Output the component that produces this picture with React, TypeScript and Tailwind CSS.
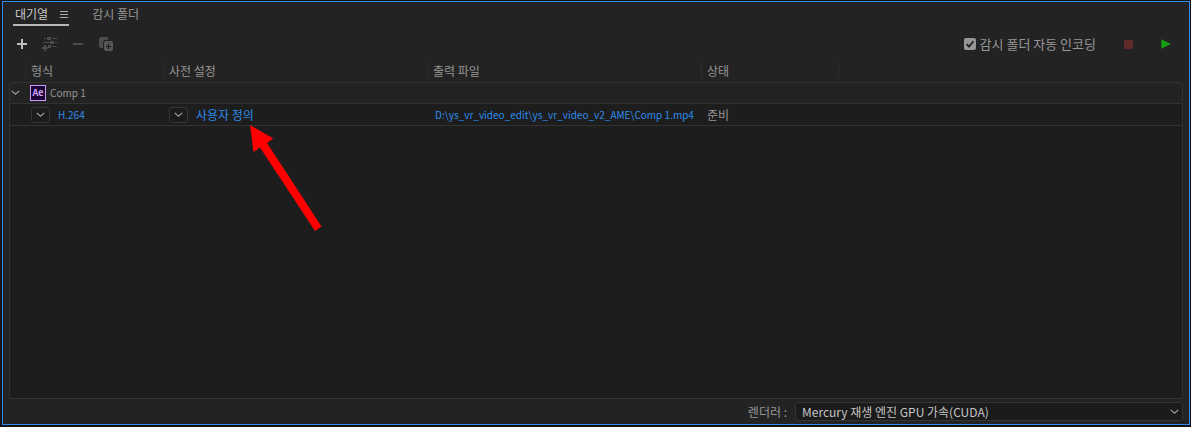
import type { ReactNode } from "react";

function Chevron({ className = "" }: { className?: string }) {
  return (
    <svg className={className} width="9" height="6" viewBox="0 0 9 6" fill="none" stroke="#a0a0a0" strokeWidth="1.2" aria-hidden="true">
      <path d="M0.7 0.9 4.5 4.3 8.3 0.9" />
    </svg>
  );
}

function ToolButton({ label, disabled, children }: { label: string; disabled?: boolean; children: ReactNode }) {
  return (
    <button type="button" aria-label={label} disabled={disabled} className="flex h-5 w-7 items-center justify-center">
      {children}
    </button>
  );
}

function DropButton({ label }: { label: string }) {
  return (
    <button type="button" aria-label={label} className="flex h-4 w-[19px] shrink-0 items-center justify-center rounded-[3px] border border-[#363636] bg-[#1b1b1b]">
      <Chevron />
    </button>
  );
}

const columns = [
  { title: "형식", width: "w-[138px]" },
  { title: "사전 설정", width: "w-[264px]" },
  { title: "출력 파일", width: "w-[274px]" },
  { title: "상태", width: "w-[137px]" },
];

export default function App() {
  return (
    <div className="flex h-screen flex-col bg-[#141414] pt-px pr-px pb-0.5 pl-0.5 font-['Noto_Sans_CJK_KR',sans-serif] text-xs leading-4 text-[#969696]">
      <main className="relative flex min-h-0 flex-1 flex-col border border-[#2d8ceb] bg-[#232323] px-1.5">
        <nav className="flex h-6 gap-[23px] pl-1" role="tablist">
          <button type="button" role="tab" aria-selected="true" className="flex h-6 items-center gap-3 border-b-2 border-[#b9b9b9] pt-0.5 pl-0.5 text-[#c8c8c8]">
            <span>대기열</span>
            <svg width="9" height="9" viewBox="0 0 9 9" fill="#a8a8a8" aria-hidden="true" shapeRendering="crispEdges">
              <path d="M0 1h8v1H0zM0 4h8v1H0zM0 7h8v1H0z" />
            </svg>
          </button>
          <button type="button" role="tab" aria-selected="false" className="flex h-6 items-center">
            감시 폴더
          </button>
        </nav>

        <div className="flex h-9 items-center justify-between pr-[3px]">
          <div className="-ml-px flex">
            <ToolButton label="추가">
              <svg width="12" height="12" viewBox="0 0 12 12" fill="#c0c0c0" shapeRendering="crispEdges">
                <path d="M5 1h2v4h4v2H7v4H5V7H1V5h4z" />
              </svg>
            </ToolButton>
            <ToolButton label="출력 추가" disabled>
              <svg width="16" height="14" viewBox="0 0 16 14" fill="#4c4c4c" shapeRendering="crispEdges">
                <path d="M2 1h2v1H2zM5 0h4v3H5zM10 1h5v1h-5zM1 5h7v1H1zM8 4h4v3H8zM13 5h2v1h-2zM8 9h1v1H8zM6 8h3v3H6zM10 9h4v1h-4z" />
                <path d="M2 8h2v2h2v2H4v2H2v-2H0v-2h2z" />
              </svg>
            </ToolButton>
            <ToolButton label="제거" disabled>
              <svg width="10" height="10" viewBox="0 0 10 10" fill="#4c4c4c" shapeRendering="crispEdges">
                <path d="M0 4h10v2H0z" />
              </svg>
            </ToolButton>
            <ToolButton label="복제" disabled>
              <svg width="14" height="14" viewBox="0 0 14 14" shapeRendering="crispEdges">
                <path fill="#4c4c4c" d="M1 0h8v3H5v1H4v7H1v-1H0V1h1z" />
                <path fill="#555555" d="M6 4h7v1h1v8h-1v1H6v-1H5V5h1z" />
                <path fill="#181818" d="M9 7h1v2h2v1h-2v2H9v-2H7V9h2z" />
              </svg>
            </ToolButton>
          </div>
          <div className="flex items-center">
            <label className="flex items-center gap-1 text-[13px]">
              <span className="grid">
                <input type="checkbox" defaultChecked className="col-start-1 row-start-1 size-3 appearance-none rounded-[2px] bg-[#969696]" />
                <svg className="pointer-events-none col-start-1 row-start-1" width="12" height="12" viewBox="0 0 12 12" fill="none" stroke="#202020" strokeWidth="1.8">
                  <path d="M2.6 6.1 5 8.6 9.4 3.2" />
                </svg>
              </span>
              감시 폴더 자동 인코딩
            </label>
            <div className="ml-[18px] flex gap-2.5">
              <ToolButton label="중지" disabled>
                <span className="size-[9px] bg-[#602a2a]" />
              </ToolButton>
              <ToolButton label="시작">
                <svg width="10" height="10" viewBox="0 0 10 10" fill="#14a014">
                  <path d="M0.3 0.3 9.8 5 0.3 9.7z" />
                </svg>
              </ToolButton>
            </div>
          </div>
        </div>

        <table className="w-full table-fixed border-separate border-spacing-0 text-left">
          <thead>
            <tr className="h-5">
              <th className="w-4 p-0" aria-label="펼치기" />
              {columns.map((c) => (
                <th key={c.title} scope="col" className={`${c.width} p-0 pb-0.5 font-normal`}>
                  <span className="block border-l border-[#2d2d2d] pl-[5px]">{c.title}</span>
                </th>
              ))}
              <th className="p-0 pb-0.5">
                <span className="block h-4 border-l border-[#2d2d2d]" />
              </th>
            </tr>
          </thead>
          <tbody>
            <tr className="h-[22px]">
              <td colSpan={6} className="rounded-t-[4px] border border-[#323232] p-0">
                <div className="flex items-center">
                  <button type="button" aria-label="Comp 1 접기" className="flex h-5 w-5 items-center pl-px">
                    <Chevron />
                  </button>
                  <span className="flex size-4 items-center justify-center border border-[#c79bf8] bg-[#1d0636] text-[9px] font-bold leading-[14px] text-[#d0a5ff]">
                    Ae
                  </span>
                  <span className="pl-1 text-[10px]">Comp 1</span>
                </div>
              </td>
            </tr>
            <tr className="h-[22px] bg-[#1d1d1d]">
              <td className="border-b border-l border-[#323232] p-0" />
              <td className="border-b border-[#323232] p-0">
                <div className="flex items-center gap-2 pl-1.5">
                  <DropButton label="형식 선택" />
                  <a href="#format" className="text-[10px] text-[#2d8ceb]">H.264</a>
                </div>
              </td>
              <td className="border-b border-[#323232] p-0">
                <div className="flex items-center gap-2 pl-1.5">
                  <DropButton label="사전 설정 선택" />
                  <a href="#preset" className="text-[#2d8ceb]">사용자 정의</a>
                </div>
              </td>
              <td className="border-b border-[#323232] p-0 pl-2">
                <a href="#output" className="block text-[10px] whitespace-nowrap text-[#2d8ceb]">D:\ys_vr_video_edit\ys_vr_video_v2_AME\Comp 1.mp4</a>
              </td>
              <td className="border-b border-[#323232] p-0 pl-1.5">준비</td>
              <td className="border-r border-b border-[#323232] p-0" />
            </tr>
          </tbody>
        </table>
        <div className="flex-1 rounded-b-[4px] border-x border-b border-[#323232] bg-[#1d1d1d]" />

        <footer className="flex h-[25px] items-center justify-end gap-2">
          <label htmlFor="renderer">렌더러 :</label>
          <div className="grid w-[388px] items-center">
            <select id="renderer" className="col-start-1 row-start-1 h-[19px] w-full appearance-none rounded-[3px] border border-[#343434] bg-[#1b1b1b] pl-1.5 text-[#c4c4c4]">
              <option>Mercury 재생 엔진 GPU 가속(CUDA)</option>
            </select>
            <Chevron className="pointer-events-none col-start-1 row-start-1 mr-1 justify-self-end" />
          </div>
        </footer>

        <svg className="pointer-events-none absolute top-[123px] left-[247px]" width="73" height="108" viewBox="0 0 73 108" fill="#ff0000" aria-hidden="true">
          <path d="M0 0 23.3 13.5 17 18 71.5 101.5 65 106 10 22.5 3.5 27z" />
        </svg>
      </main>
    </div>
  );
}
